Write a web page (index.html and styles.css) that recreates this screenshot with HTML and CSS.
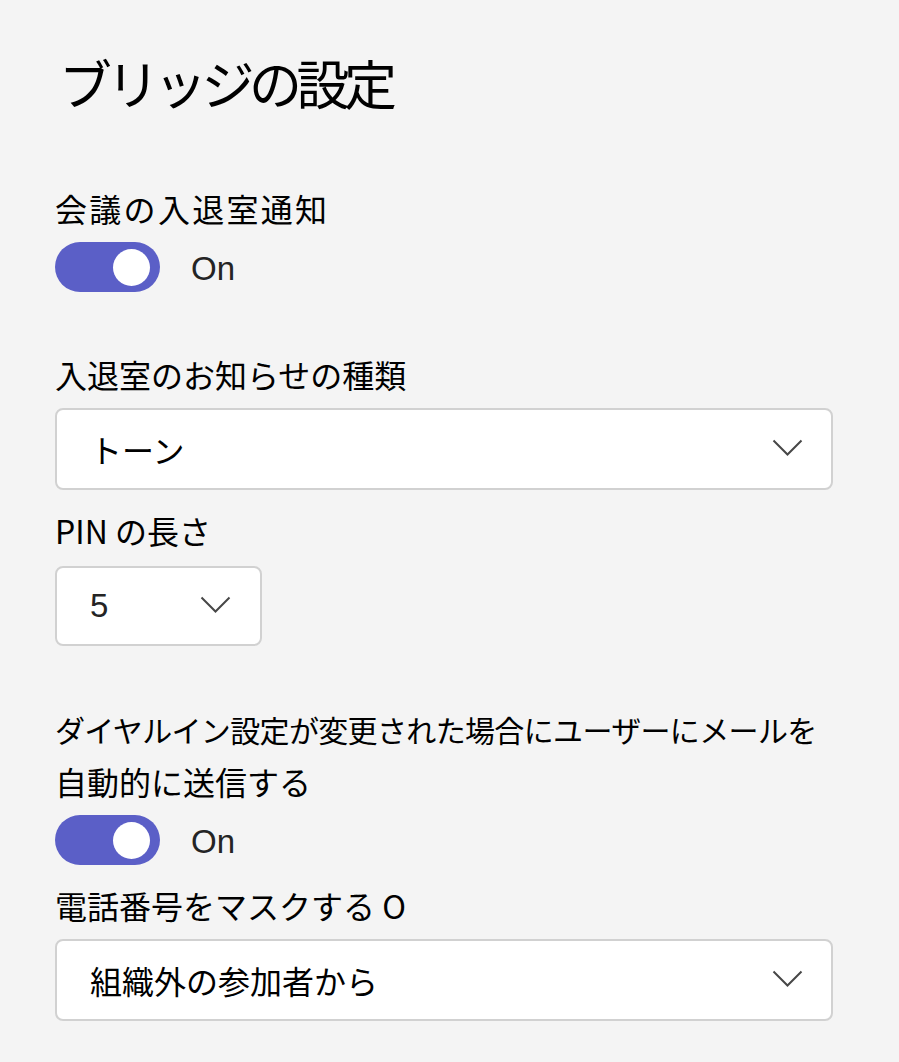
FILE: index.html
```html
<!DOCTYPE html>
<html lang="ja">
<head>
<meta charset="utf-8">
<title>ブリッジの設定</title>
<link rel="stylesheet" href="styles.css">
</head>
<body>
<main class="page">
  <h1 class="title">ブリッジの設定</h1>

  <div class="label label-wide gap-title">会議の入退室通知</div>
  <div class="toggle-row gap-s">
    <span class="toggle"><span class="knob"></span></span>
    <span class="toggle-text">On</span>
  </div>

  <div class="label gap-l">入退室のお知らせの種類</div>
  <div class="select select-full gap-s">
    <span class="select-text">トーン</span>
    <svg class="chev" width="31" height="17" viewBox="0 0 31 17"><path d="M1.5 1.5 L15.5 15.5 L29.5 1.5" fill="none" stroke="#474747" stroke-width="2"/></svg>
  </div>

  <div class="label gap-m">PIN の長さ</div>
  <div class="select select-small gap-s2">
    <span class="select-text latin">5</span>
    <svg class="chev" width="31" height="17" viewBox="0 0 31 17"><path d="M1.5 1.5 L15.5 15.5 L29.5 1.5" fill="none" stroke="#474747" stroke-width="2"/></svg>
  </div>

  <div class="label gap-l">
    <span class="line-narrow">ダイヤルイン設定が変更された場合にユーザーにメールを</span><br>
    <span>自動的に送信する</span>
  </div>
  <div class="toggle-row gap-s">
    <span class="toggle"><span class="knob"></span></span>
    <span class="toggle-text">On</span>
  </div>

  <div class="label gap-m">電話番号をマスクする O</div>
  <div class="select select-full gap-s">
    <span class="select-text">組織外の参加者から</span>
    <svg class="chev" width="31" height="17" viewBox="0 0 31 17"><path d="M1.5 1.5 L15.5 15.5 L29.5 1.5" fill="none" stroke="#474747" stroke-width="2"/></svg>
  </div>
</main>
</body>
</html>
```

FILE: styles.css
```css
html, body {
  margin: 0;
  padding: 0;
  background: #f4f4f4;
}

body {
  font-family: "Noto Sans CJK JP", "Noto Sans", sans-serif;
  color: #000;
}

.page {
  width: 778px;
  padding: 52px 0 0 55px;
  display: flex;
  flex-direction: column;
  align-items: flex-start;
}

.title {
  margin: 0;
  font-size: 53px;
  line-height: 60px;
  font-weight: 400;
  letter-spacing: -5.5px;
  padding-left: 4px;
}

.label {
  font-size: 32px;
  line-height: 52px;
  white-space: nowrap;
}

.label-wide {
  letter-spacing: 2.3px;
}

.line-narrow {
  font-size: 30px;
  letter-spacing: -0.65px;
}

.gap-title { margin-top: 70px; }
.gap-s { margin-top: 8px; }
.gap-s2 { margin-top: 10px; }
.gap-m { margin-top: 14px; }
.gap-l { margin-top: 56px; }

.toggle-row {
  display: flex;
  align-items: center;
  height: 50px;
}

.toggle {
  width: 105px;
  height: 50px;
  border-radius: 25px;
  background: #5b5fc7;
  display: flex;
  align-items: center;
  justify-content: flex-end;
  padding-right: 10px;
  box-sizing: border-box;
}

.knob {
  width: 37px;
  height: 37px;
  border-radius: 50%;
  background: #fff;
}

.toggle-text {
  margin-left: 31px;
  font-family: "Liberation Sans", "Noto Sans", sans-serif;
  font-size: 33px;
  color: #242424;
  padding-top: 4px;
}

.select {
  box-sizing: border-box;
  height: 82px;
  background: #fff;
  border: 2px solid #d1d1d1;
  border-radius: 8px;
  display: flex;
  align-items: center;
  justify-content: space-between;
  padding: 0 28px 0 33px;
}

.select-full {
  width: 778px;
}

.select-small {
  width: 207px;
  height: 80px;
  padding-right: 29px;
}

.select-text {
  font-size: 32px;
  color: #000;
}

.select-text.latin {
  font-family: "Liberation Sans", sans-serif;
  color: #242424;
  font-size: 33px;
}

.chev {
  display: block;
  margin-top: -3px;
}
```
